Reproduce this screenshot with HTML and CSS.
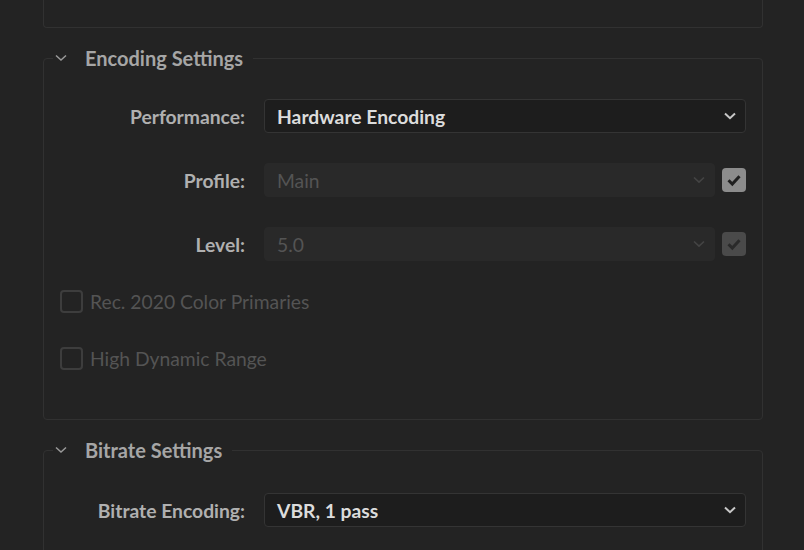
FILE: index.html
```html
<!DOCTYPE html>
<html>
<head>
<meta charset="utf-8">
<link rel="stylesheet" href="styles.css">
</head>
<body>
<div class="page">
  <div class="panel-top"></div>

  <fieldset class="group group-encoding">
    <legend class="group-title">
      <svg class="twisty" width="12" height="8" viewBox="0 0 12 8"><path d="M1 1.5 L6 6 L11 1.5" fill="none" stroke="#9a9a9a" stroke-width="1.5"/></svg>
      <span>Encoding Settings</span>
    </legend>
    <div class="rows">
      <div class="row">
        <span class="label">Performance:</span>
        <div class="control">
          <div class="select">
            <span class="value">Hardware Encoding</span>
            <svg class="caret" width="12" height="8" viewBox="0 0 12 8"><path d="M1 1.5 L6 6.2 L11 1.5" fill="none" stroke="#c8c8c8" stroke-width="2"/></svg>
          </div>
        </div>
      </div>
      <div class="row">
        <span class="label">Profile:</span>
        <div class="control">
          <div class="select disabled">
            <span class="value">Main</span>
            <svg class="caret" width="12" height="8" viewBox="0 0 12 8"><path d="M1 1.5 L6 6.2 L11 1.5" fill="none" stroke="#444" stroke-width="1.6"/></svg>
          </div>
          <span class="check on">
            <svg width="24" height="24" viewBox="0 0 24 24"><path d="M6.5 12.2 L10.3 16 L17.5 8.2" fill="none" stroke="#1f1f1f" stroke-width="3"/></svg>
          </span>
        </div>
      </div>
      <div class="row">
        <span class="label">Level:</span>
        <div class="control">
          <div class="select disabled">
            <span class="value">5.0</span>
            <svg class="caret" width="12" height="8" viewBox="0 0 12 8"><path d="M1 1.5 L6 6.2 L11 1.5" fill="none" stroke="#444" stroke-width="1.6"/></svg>
          </div>
          <span class="check dim">
            <svg width="24" height="24" viewBox="0 0 24 24"><path d="M6.5 12.2 L10.3 16 L17.5 8.2" fill="none" stroke="#2a2a2a" stroke-width="3"/></svg>
          </span>
        </div>
      </div>
    </div>
    <div class="options">
      <label class="option"><span class="box"></span><span>Rec. 2020 Color Primaries</span></label>
      <label class="option"><span class="box"></span><span>High Dynamic Range</span></label>
    </div>
  </fieldset>

  <fieldset class="group group-bitrate">
    <legend class="group-title">
      <svg class="twisty" width="12" height="8" viewBox="0 0 12 8"><path d="M1 1.5 L6 6 L11 1.5" fill="none" stroke="#9a9a9a" stroke-width="1.5"/></svg>
      <span>Bitrate Settings</span>
    </legend>
    <div class="rows">
      <div class="row">
        <span class="label">Bitrate Encoding:</span>
        <div class="control">
          <div class="select">
            <span class="value">VBR, 1 pass</span>
            <svg class="caret" width="12" height="8" viewBox="0 0 12 8"><path d="M1 1.5 L6 6.2 L11 1.5" fill="none" stroke="#c8c8c8" stroke-width="2"/></svg>
          </div>
        </div>
      </div>
    </div>
  </fieldset>
</div>
</body>
</html>
```

FILE: styles.css
```css
* { box-sizing: border-box; }

html, body {
  margin: 0;
  height: 100%;
  background: #232323;
  overflow: hidden;
}

body {
  font-family: Lato, "Open Sans", sans-serif;
  color: #b3b3b3;
}

.page {
  padding: 0 41px 0 43px;
}

.panel-top {
  height: 28px;
  border: 1px solid #313131;
  border-top: none;
  border-radius: 0 0 4px 4px;
}

.group {
  margin: 19px 0 0 0;
  padding: 0 16px 0 0;
  border: 1px solid #313131;
  border-radius: 4px;
  min-width: 0;
}

.group-title {
  margin-left: 9px;
  padding: 0 10px 0 2px;
  height: 22px;
  display: flex;
  align-items: center;
  gap: 18px;
  font-size: 20px;
  font-weight: 700;
  color: #a6a6a6;
}

.twisty { display: block; flex: none; }

.rows {
  display: flex;
  flex-direction: column;
  gap: 30px;
  padding-top: 30px;
}

.group-bitrate .rows { padding-top: 32px; }

.row {
  display: grid;
  grid-template-columns: 201px 1fr;
  column-gap: 19px;
  align-items: center;
}

.label {
  text-align: right;
  font-size: 19.3px;
  font-weight: 700;
  color: #b0b0b0;
}

.control {
  display: flex;
  align-items: center;
  gap: 7px;
}

.select {
  flex: 1;
  height: 34px;
  display: flex;
  align-items: center;
  justify-content: space-between;
  padding: 0 9px 0 12px;
  background: #1d1d1d;
  border: 1px solid #343434;
  border-radius: 4px;
  font-size: 19.3px;
  font-weight: 700;
  color: #dcdcdc;
}

.select.disabled {
  background: #292929;
  border-color: #292929;
  color: #545454;
  font-weight: 400;
}

.caret { display: block; flex: none; }

.check {
  flex: none;
  width: 24px;
  height: 24px;
  border-radius: 4px;
  display: block;
}
.check svg { display: block; }
.check.on { background: #8c8c8c; }
.check.dim { background: #4a4a4a; }

.options {
  display: flex;
  flex-direction: column;
  gap: 34px;
  padding: 29px 0 49px 16px;
}

.option {
  display: flex;
  align-items: center;
  gap: 7px;
  height: 23px;
  font-size: 19.3px;
  color: #545454;
}

.box {
  width: 23px;
  height: 23px;
  border: 2px solid #3d3d3d;
  border-radius: 4px;
  flex: none;
}

.group-bitrate {
  margin-top: 19px;
  padding-bottom: 40px;
}
```
